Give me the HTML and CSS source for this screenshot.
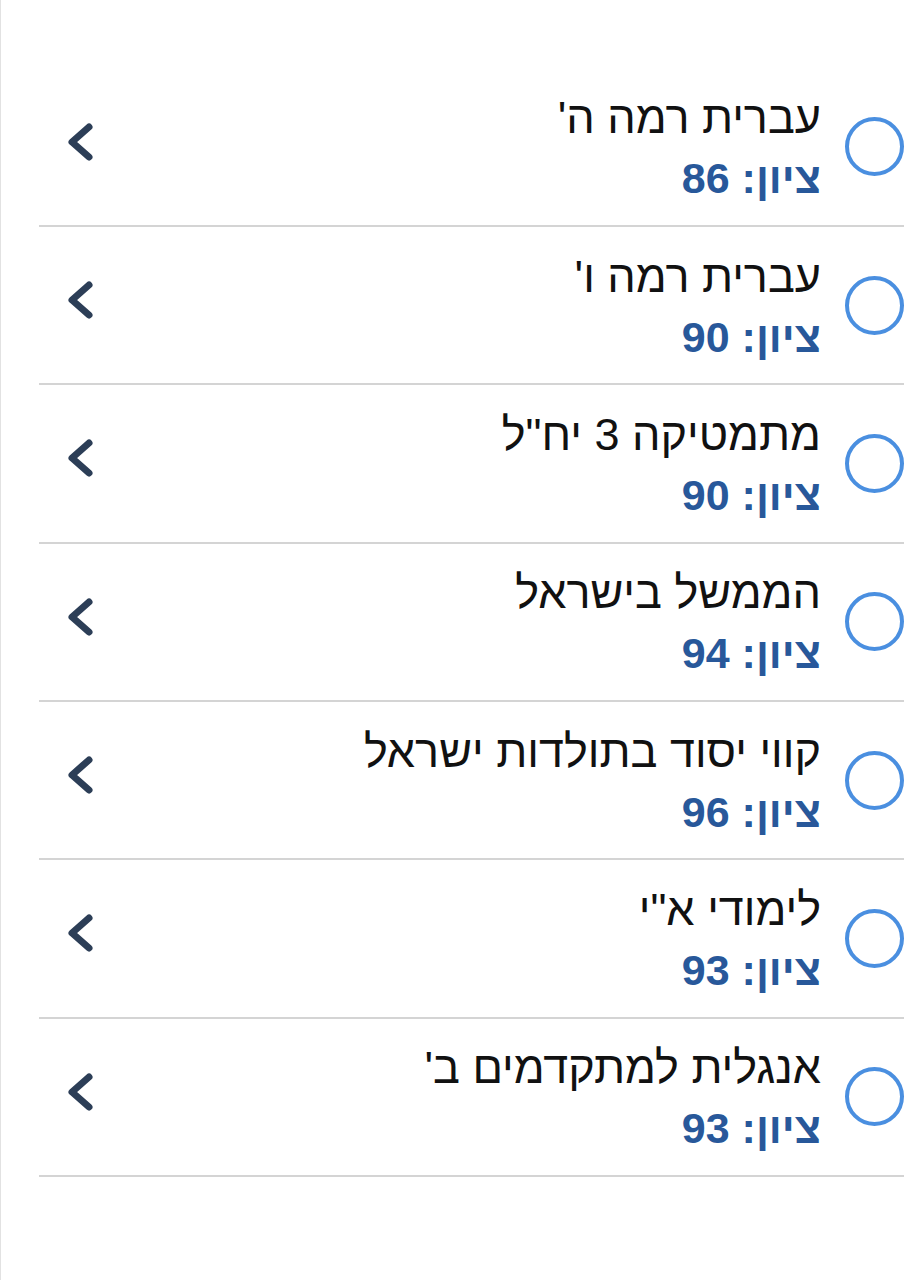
FILE: index.html
```html
<!DOCTYPE html>
<html lang="he" dir="rtl">
<head>
<meta charset="utf-8">
<title>ציונים</title>
<link rel="stylesheet" href="styles.css">
</head>
<body>
<div class="page">
  <ul class="list">
    <li class="row">
      <span class="radio"></span>
      <div class="info">
        <div class="title">עברית רמה ה'</div>
        <div class="score">ציון: 86</div>
      </div>
      <svg class="chev" viewBox="0 0 30 40" width="30" height="40"><polyline points="24,5 7,20 24,35" /></svg>
    </li>
    <li class="row">
      <span class="radio"></span>
      <div class="info">
        <div class="title">עברית רמה ו'</div>
        <div class="score">ציון: 90</div>
      </div>
      <svg class="chev" viewBox="0 0 30 40" width="30" height="40"><polyline points="24,5 7,20 24,35" /></svg>
    </li>
    <li class="row">
      <span class="radio"></span>
      <div class="info">
        <div class="title">מתמטיקה 3 יח"ל</div>
        <div class="score">ציון: 90</div>
      </div>
      <svg class="chev" viewBox="0 0 30 40" width="30" height="40"><polyline points="24,5 7,20 24,35" /></svg>
    </li>
    <li class="row">
      <span class="radio"></span>
      <div class="info">
        <div class="title">הממשל בישראל</div>
        <div class="score">ציון: 94</div>
      </div>
      <svg class="chev" viewBox="0 0 30 40" width="30" height="40"><polyline points="24,5 7,20 24,35" /></svg>
    </li>
    <li class="row">
      <span class="radio"></span>
      <div class="info">
        <div class="title">קווי יסוד בתולדות ישראל</div>
        <div class="score">ציון: 96</div>
      </div>
      <svg class="chev" viewBox="0 0 30 40" width="30" height="40"><polyline points="24,5 7,20 24,35" /></svg>
    </li>
    <li class="row">
      <span class="radio"></span>
      <div class="info">
        <div class="title">לימודי א"י</div>
        <div class="score">ציון: 93</div>
      </div>
      <svg class="chev" viewBox="0 0 30 40" width="30" height="40"><polyline points="24,5 7,20 24,35" /></svg>
    </li>
    <li class="row">
      <span class="radio"></span>
      <div class="info">
        <div class="title">אנגלית למתקדמים ב'</div>
        <div class="score">ציון: 93</div>
      </div>
      <svg class="chev" viewBox="0 0 30 40" width="30" height="40"><polyline points="24,5 7,20 24,35" /></svg>
    </li>
  </ul>
</div>
</body>
</html>
```
FILE: styles.css
```css
html, body {
  margin: 0;
  padding: 0;
  background: #ffffff;
}
body {
  font-family: "Liberation Sans", Arial, sans-serif;
  height: 1280px;
}
.page {
  border-left: 1px solid #e2e2e2;
  height: 1280px;
  box-sizing: border-box;
  padding: 68.67px 20px 0 38px;
}
.list {
  list-style: none;
  margin: 0;
  padding: 0;
}
.row {
  display: flex;
  align-items: center;
  height: 156.33px;
  border-bottom: 2px solid #d4d4d4;
}
.radio {
  flex: none;
  width: 51px;
  height: 51px;
  border: 4px solid #4a8fe0;
  border-radius: 50%;
  margin-left: 24px;
}
.info {
  display: flex;
  flex-direction: column;
  align-items: flex-start;
  padding-top: 3px;
}
.title {
  font-size: 45px;
  line-height: 54px;
  color: #111111;
}
.score {
  margin-top: 6px;
  font-size: 43px;
  line-height: 54px;
  font-weight: bold;
  color: #28589a;
}
.chev {
  flex: none;
  margin-right: auto;
  margin-top: -10px;
  margin-left: 26px;
}
.chev polyline {
  fill: none;
  stroke: #2c3e57;
  stroke-width: 7;
  stroke-linecap: round;
  stroke-linejoin: round;
}
```
